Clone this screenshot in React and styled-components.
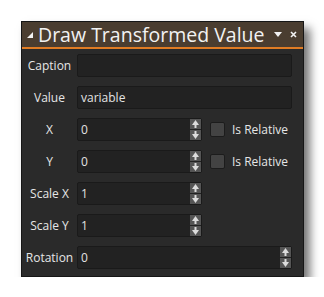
import React from "react";
import styled, { createGlobalStyle } from "styled-components";

const GlobalStyle = createGlobalStyle`
  html, body {
    margin: 0;
    padding: 0;
    background: #ffffff;
  }
  body {
    padding: 21px 0 0 21px;
    font-family: "Open Sans", "Noto Sans", sans-serif;
  }
`;

const Window = styled.div`
  width: 283px;
  background: #2a2a2a;
  border: 1px solid #161616;
  box-sizing: border-box;
  box-shadow: 6px 7px 9px rgba(0, 0, 0, 0.55);
`;

const TitleBar = styled.div`
  height: 25px;
  background: #4a3d30;
  border-bottom: 2px solid #e07c24;
  display: flex;
  align-items: center;
  padding: 0 6px 0 5px;
  color: #f2f2f2;
`;

const Title = styled.div`
  flex: 1;
  font-size: 19.5px;
  line-height: 25px;
  margin-left: 5px;
  white-space: nowrap;
`;

const TitleIcons = styled.div`
  display: flex;
  align-items: center;
  gap: 8px;
`;

const Body = styled.div`
  display: flex;
  flex-direction: column;
  gap: 9px;
  padding: 5px 11px 7px 0;
`;

const Row = styled.div`
  display: flex;
  align-items: center;
  height: 23px;
`;

const Label = styled.div`
  width: 55px;
  flex: none;
  text-align: center;
  font-size: 12px;
  color: #e6e6e6;
`;

const Field = styled.div`
  display: flex;
  align-items: stretch;
  height: 23px;
  width: ${(p) => (p.$w ? `${p.$w}px` : "auto")};
  flex: ${(p) => (p.$w ? "none" : "1")};
  background: #222222;
  border: 1px solid #1a1a1a;
  border-radius: 2px;
  box-sizing: border-box;
`;

const FieldText = styled.div`
  flex: 1;
  font-size: 12px;
  line-height: 21px;
  padding-left: 3px;
  color: #e2e2e2;
`;

const Spinner = styled.div`
  display: flex;
  flex-direction: column;
  gap: 1px;
  width: 11px;
  flex: none;
`;

const SpinButton = styled.div`
  flex: 1;
  background: #555555;
  display: flex;
  align-items: center;
  justify-content: center;
`;

const Check = styled.div`
  width: 15px;
  height: 15px;
  margin-left: 8px;
  box-sizing: border-box;
  background: #434343;
  border: 1px solid #1c1c1c;
  border-radius: 2px;
  flex: none;
`;

const CheckLabel = styled.div`
  margin-left: 7px;
  font-size: 12px;
  color: #e6e6e6;
  white-space: nowrap;
`;

const Arrow = ({ down }) => (
  <svg width="7" height="8" viewBox="0 0 7 8">
    <g transform={down ? "rotate(180 3.5 4)" : undefined}>
      <polygon points="3.5,0 7,5 0,5" fill="#dcdcdc" />
      <rect x="2.5" y="5" width="2" height="3" fill="#dcdcdc" />
    </g>
  </svg>
);

const SpinField = ({ value, width }) => (
  <Field $w={width}>
    <FieldText>{value}</FieldText>
    <Spinner>
      <SpinButton>
        <Arrow />
      </SpinButton>
      <SpinButton>
        <Arrow down />
      </SpinButton>
    </Spinner>
  </Field>
);

export default function App() {
  return (
    <>
      <GlobalStyle />
      <Window>
        <TitleBar>
          <svg width="6" height="6" viewBox="0 0 6 6">
            <polygon points="6,0 6,6 0,6" fill="#f2f2f2" />
          </svg>
          <Title>Draw Transformed Value</Title>
          <TitleIcons>
            <svg width="8" height="5" viewBox="0 0 8 5">
              <polygon points="0,0 8,0 4,5" fill="#f2f2f2" />
            </svg>
            <svg width="7" height="7" viewBox="0 0 7 7">
              <path d="M1 1 L6 6 M6 1 L1 6" stroke="#f2f2f2" strokeWidth="1.6" />
            </svg>
          </TitleIcons>
        </TitleBar>
        <Body>
          <Row>
            <Label>Caption</Label>
            <Field>
              <FieldText />
            </Field>
          </Row>
          <Row>
            <Label>Value</Label>
            <Field>
              <FieldText>variable</FieldText>
            </Field>
          </Row>
          <Row>
            <Label>X</Label>
            <SpinField value="0" width={125} />
            <Check />
            <CheckLabel>Is Relative</CheckLabel>
          </Row>
          <Row>
            <Label>Y</Label>
            <SpinField value="0" width={125} />
            <Check />
            <CheckLabel>Is Relative</CheckLabel>
          </Row>
          <Row>
            <Label>Scale X</Label>
            <SpinField value="1" width={125} />
          </Row>
          <Row>
            <Label>Scale Y</Label>
            <SpinField value="1" width={125} />
          </Row>
          <Row>
            <Label>Rotation</Label>
            <SpinField value="0" />
          </Row>
        </Body>
      </Window>
    </>
  );
}
